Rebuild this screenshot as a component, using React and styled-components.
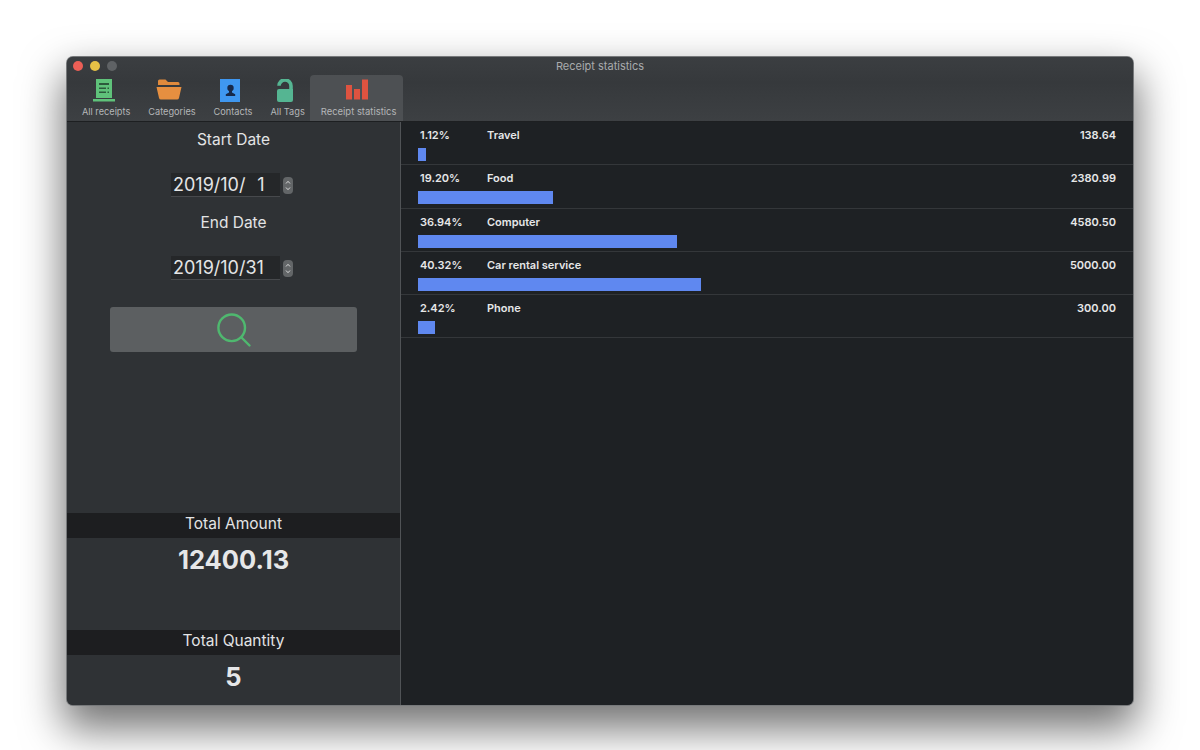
import React from "react";
import styled, { createGlobalStyle } from "styled-components";

const GlobalStyle = createGlobalStyle`
  html, body {
    margin: 0;
    padding: 0;
    background: #ffffff;
    overflow: hidden;
  }
  * {
    box-sizing: border-box;
  }
`;

const Page = styled.div`
  width: 1200px;
  height: 750px;
  padding: 57px 67px 45px;
  font-family: Inter, "Liberation Sans", sans-serif;
`;

const Window = styled.div`
  width: 1066px;
  height: 648px;
  display: flex;
  flex-direction: column;
  border-radius: 6px;
  overflow: hidden;
  background: #2f3235;
  box-shadow: 0 0 0 1px #77797b, 0 20px 42px 4px rgba(0, 0, 0, 0.55);
`;

const Header = styled.header`
  height: 65px;
  flex: none;
  display: flex;
  flex-direction: column;
  background: linear-gradient(#3b3e41, #36393c 40%, #3d4043);
  border-bottom: 1px solid #1d1f21;
`;

const TitleBar = styled.div`
  height: 18px;
  flex: none;
  display: flex;
  align-items: center;
  justify-content: center;
  position: relative;
  color: #a9abad;
  font-size: 11px;
`;

const Lights = styled.div`
  position: absolute;
  left: 6px;
  top: 4px;
  display: flex;
  gap: 7px;
`;

const Light = styled.span`
  width: 10px;
  height: 10px;
  border-radius: 50%;
  background: ${(p) => p.$color};
`;

const Toolbar = styled.nav`
  flex: 1;
  display: flex;
  padding-left: 6px;
`;

const ToolItem = styled.div`
  display: flex;
  flex-direction: column;
  align-items: center;
  justify-content: space-between;
  height: 46px;
  padding: ${(p) => (p.$active ? "4px 7px 4px 11px" : "4px 9px 4px")};
  margin-left: ${(p) => (p.$active ? "-4px" : "0")};
  background: ${(p) => (p.$active ? "#4d5053" : "transparent")};
  border-radius: 4px 4px 0 0;
  color: #b4b6b8;
  font-size: ${(p) => (p.$active ? "9.45px" : "9.2px")};
  white-space: nowrap;
`;

const IconSlot = styled.div`
  display: flex;
  margin-right: ${(p) => p.$shift * 2}px;
`;

const Body = styled.div`
  flex: 1;
  min-height: 0;
  display: flex;
`;

const Sidebar = styled.aside`
  width: 334px;
  flex: none;
  display: flex;
  flex-direction: column;
  align-items: center;
  background: #2f3235;
  border-right: 1px solid #505356;
`;

const DateLabel = styled.div`
  height: 20px;
  margin-top: ${(p) => p.$top}px;
  color: #e3e4e5;
  font-size: 15.5px;
  line-height: 20px;
`;

const DateRow = styled.div`
  display: flex;
  align-items: center;
  gap: 3px;
  margin: 23px 0 0 -3px;
  height: 24px;
`;

const DateField = styled.div`
  width: 109px;
  height: 24px;
  padding-left: 2px;
  background: #252729;
  border-bottom: 1px solid #47494c;
  color: #e4e5e6;
  font-size: 18px;
  line-height: 23px;
  white-space: pre;
`;

const Stepper = styled.div`
  width: 10px;
  height: 17px;
  border-radius: 4px;
  background: #636668;
  display: flex;
  align-items: center;
  justify-content: center;
`;

const SearchButton = styled.button`
  width: 247px;
  height: 45px;
  margin-top: 27px;
  padding: 0;
  display: flex;
  align-items: center;
  justify-content: center;
  background: #5c5f61;
  border: none;
  border-radius: 3px;
`;

const Totals = styled.div`
  margin-top: auto;
  width: 100%;
  display: flex;
  flex-direction: column;
`;

const TotalHeading = styled.div`
  height: 25px;
  background: #1d1e20;
  color: #e3e4e5;
  font-size: 15.5px;
  line-height: 21px;
  text-align: center;
`;

const TotalValue = styled.div`
  height: ${(p) => p.$height}px;
  padding-top: 6px;
  color: #e6e7e8;
  font-size: 25.5px;
  font-weight: 700;
  line-height: 32px;
  text-align: center;
`;

const List = styled.main`
  flex: 1;
  background: #1e2124;
`;

const Row = styled.div`
  height: 43.3px;
  padding: 5px 17px 0 17px;
  border-bottom: 1px solid #34373a;
`;

const RowText = styled.div`
  display: flex;
  height: 16px;
  padding-left: 2px;
  color: #e6e7e8;
  font-size: 11px;
  font-weight: 600;
  line-height: 16px;
`;

const Percent = styled.span`
  width: 67px;
`;

const Name = styled.span`
  flex: 1;
`;

const Bar = styled.div`
  height: 13px;
  margin-top: 5px;
  background: #5f88f0;
`;

const ReceiptIcon = () => (
  <svg width="22" height="23" viewBox="0 0 22 23">
    <path d="M3 0h16v19H3z" fill="#5fc27a" />
    <path d="M0 20h22v2.4H0z" fill="#5fc27a" />
    <path d="M6 4h10v2H6zM6 8.5h7v1.6H6zM14.5 8.5H16v1.6h-1.5zM6 12.5h7v1.6H6zM14.5 12.5H16v1.6h-1.5z" fill="#2c5a3c" />
  </svg>
);

const FolderIcon = () => (
  <svg width="26" height="21" viewBox="0 0 26 21">
    <path d="M2 6V2a1.5 1.5 0 0 1 1.5-1.5h6L12 3h10a1.5 1.5 0 0 1 1.5 1.5V6z" fill="#e08a3c" />
    <path d="M0.5 8h25L23 19a2 2 0 0 1-2 1.5H5A2 2 0 0 1 3 19z" fill="#e68f40" />
  </svg>
);

const ContactIcon = () => (
  <svg width="20" height="23" viewBox="0 0 20 23">
    <path d="M0 0h20v23H0z" fill="#3f97f0" />
    <circle cx="10.5" cy="9" r="3.2" fill="#17294a" />
    <path d="M9 12h3v1.6l3.2 1.6V17H5.8v-1.8L9 13.6z" fill="#17294a" />
  </svg>
);

const TagIcon = () => (
  <svg width="16" height="23" viewBox="0 0 16 23">
    <path d="M2 6.8A5.9 5.9 0 0 1 14 7v5" fill="none" stroke="#55b592" strokeWidth="3.6" />
    <path d="M0 12a2 2 0 0 1 2-2h14v11a2 2 0 0 1-2 2H2a2 2 0 0 1-2-2z" fill="#55b592" />
  </svg>
);

const BarsIcon = () => (
  <svg width="22" height="21" viewBox="0 0 22 21">
    <path d="M0 6h6v14.5H0zM8 10h6v10.5H8zM16 0.5h6v20h-6z" fill="#de5340" />
  </svg>
);

const Chevrons = () => (
  <svg width="6" height="13" viewBox="0 0 6 13">
    <path d="M1 4.5l2-2.2 2 2.2M1 8.5l2 2.2 2-2.2" fill="none" stroke="#d8d9da" strokeWidth="1" />
  </svg>
);

const SearchIcon = () => (
  <svg width="36" height="36" viewBox="0 0 36 36">
    <circle cx="15.7" cy="15.8" r="13.3" fill="none" stroke="#4fb86f" strokeWidth="2.4" />
    <path d="M25.5 25.5l8 8" fill="none" stroke="#4fb86f" strokeWidth="2.4" strokeLinecap="round" />
  </svg>
);

const tools = [
  { label: "All receipts", icon: <ReceiptIcon />, shift: 2 },
  { label: "Categories", icon: <FolderIcon />, shift: 3 },
  { label: "Contacts", icon: <ContactIcon />, shift: 3 },
  { label: "All Tags", icon: <TagIcon />, shift: 3 },
  { label: "Receipt statistics", icon: <BarsIcon />, shift: 2, active: true },
];

const rows = [
  { percent: 1.12, name: "Travel", amount: "138.64" },
  { percent: 19.2, name: "Food", amount: "2380.99" },
  { percent: 36.94, name: "Computer", amount: "4580.50" },
  { percent: 40.32, name: "Car rental service", amount: "5000.00" },
  { percent: 2.42, name: "Phone", amount: "300.00" },
];

const App = () => {
  return (
    <Page>
      <GlobalStyle />
      <Window>
        <Header>
          <TitleBar>
            <Lights>
              <Light $color="#ec5f56" />
              <Light $color="#e6c146" />
              <Light $color="#5f6265" />
            </Lights>
            Receipt statistics
          </TitleBar>
          <Toolbar>
            {tools.map((tool) => (
              <ToolItem key={tool.label} $active={tool.active}>
                <IconSlot $shift={tool.shift}>{tool.icon}</IconSlot>
                <span>{tool.label}</span>
              </ToolItem>
            ))}
          </Toolbar>
        </Header>
        <Body>
          <Sidebar>
            <DateLabel $top={8}>Start Date</DateLabel>
            <DateRow>
              <DateField>{"2019/10/  \u200A1"}</DateField>
              <Stepper>
                <Chevrons />
              </Stepper>
            </DateRow>
            <DateLabel $top={16}>End Date</DateLabel>
            <DateRow>
              <DateField>2019/10/31</DateField>
              <Stepper>
                <Chevrons />
              </Stepper>
            </DateRow>
            <SearchButton>
              <SearchIcon />
            </SearchButton>
            <Totals>
              <TotalHeading>Total Amount</TotalHeading>
              <TotalValue $height={92}>12400.13</TotalValue>
              <TotalHeading>Total Quantity</TotalHeading>
              <TotalValue $height={50}>5</TotalValue>
            </Totals>
          </Sidebar>
          <List>
            {rows.map((row) => (
              <Row key={row.name}>
                <RowText>
                  <Percent>{row.percent.toFixed(2)}%</Percent>
                  <Name>{row.name}</Name>
                  <span>{row.amount}</span>
                </RowText>
                <Bar style={{ width: row.percent * 7.02 }} />
              </Row>
            ))}
          </List>
        </Body>
      </Window>
    </Page>
  );
};

export default App;
